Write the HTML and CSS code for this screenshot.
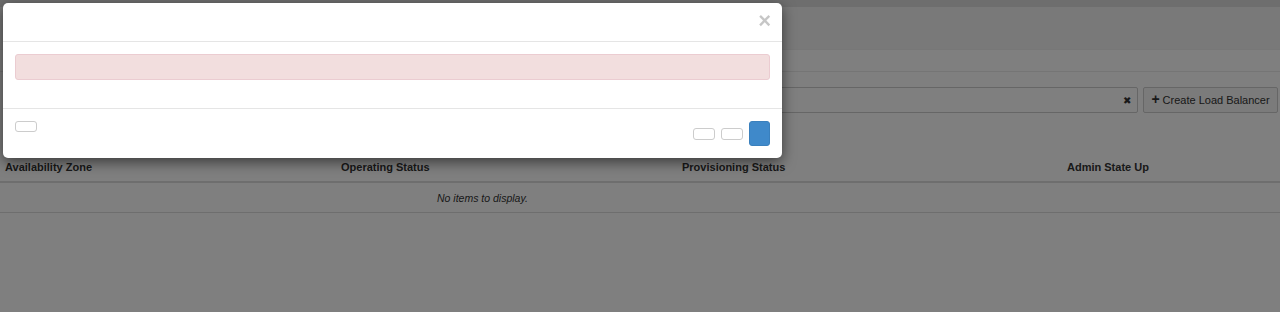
FILE: index.html
```html
<!DOCTYPE html>
<html lang="en">
<head>
  <meta charset="UTF-8">
  <title>Load Balancers</title>
  <link rel="stylesheet" href="styles.css">
</head>
<body>

<div class="page">
  <div class="topbar"></div>
  <div class="page-header"></div>

  <div class="toolbar">
    <div class="search">
      <span class="search-clear">&#x2716;</span>
    </div>
    <button class="btn-create"><span class="plus">+</span> Create Load Balancer</button>
  </div>

  <table class="lb-table">
    <thead>
      <tr>
        <th class="col-az">Availability Zone</th>
        <th class="col-op">Operating Status</th>
        <th class="col-prov">Provisioning Status</th>
        <th class="col-admin">Admin State Up</th>
      </tr>
    </thead>
    <tbody>
      <tr>
        <td colspan="4" class="empty">No items to display.</td>
      </tr>
    </tbody>
  </table>
</div>

<div class="backdrop"></div>

<!-- modal -->
<div class="modal">
  <div class="modal-header">
    <span class="close">&times;</span>
  </div>
  <div class="modal-body">
    <div class="alert"></div>
  </div>
  <div class="modal-footer">
    <button class="btn btn-help"></button>
    <div class="footer-actions">
      <button class="btn btn-small"></button>
      <button class="btn btn-small"></button>
      <button class="btn btn-primary"></button>
    </div>
  </div>
</div>

</body>
</html>
```

FILE: styles.css
```css
body {
  margin: 0;
  padding: 0;
  height: 312px;
  background: #fff;
  font-family: 'Liberation Sans', Arial, Helvetica, sans-serif;
  font-size: 12px;
  color: #333;
  overflow: hidden;
}

.page {
  width: 100%;
}

.topbar {
  height: 7px;
  background: #dcdcdc;
}

.page-header {
  height: 42px;
  background: #f3f3f3;
  border-bottom: 1px solid #eee;
  margin-bottom: 21px;
}

.toolbar {
  display: flex;
  justify-content: flex-end;
  gap: 5px;
  padding: 15px 2px 0 0;
  border-top: 1px solid #ebebeb;
}

.search {
  width: 380px;
  height: 24px;
  border: 1px solid #ccc;
  border-radius: 2px;
  display: flex;
  align-items: center;
  justify-content: flex-end;
  padding-right: 6px;
}

.search-clear {
  font-size: 10px;
  color: #333;
}

.btn-create {
  height: 26px;
  width: 135px;
  padding: 0 6px;
  display: flex;
  align-items: center;
  justify-content: center;
  gap: 3px;
  white-space: nowrap;
  font-family: 'Liberation Sans', Arial, sans-serif;
  font-size: 11px;
  color: #333;
  background: #f6f6f6;
  border: 1px solid #ccc;
  border-radius: 2px;
}

.plus {
  font-weight: 700;
  font-size: 14px;
  line-height: 1;
  margin-top: -2px;
}

.lb-table {
  width: 100%;
  border-collapse: collapse;
  margin-top: 41px;
}

.lb-table th {
  text-align: left;
  font-weight: 700;
  font-size: 11px;
  color: #333;
  padding: 7px 5px 8px;
  border-bottom: 2px solid #ddd;
}

.col-az { width: 326px; }
.col-op { width: 331px; }
.col-prov { width: 375px; }

.lb-table td {
  padding: 9px 5px 8px;
  border-bottom: 1px solid #ddd;
}

.empty {
  font-style: italic;
  font-size: 10.5px;
  padding-left: 437px !important;
}

.backdrop {
  position: fixed;
  top: 0;
  left: 0;
  right: 0;
  bottom: 0;
  background: rgba(0, 0, 0, 0.5);
}

.modal {
  position: absolute;
  top: 3px;
  left: 3px;
  width: 779px;
  height: 155px;
  background: #fff;
  border-radius: 5px;
  box-shadow: 0 4px 14px rgba(0, 0, 0, 0.55);
  display: flex;
  flex-direction: column;
}

.modal-header {
  height: 38px;
  border-bottom: 1px solid #e5e5e5;
  display: flex;
  justify-content: flex-end;
  align-items: center;
  padding-right: 11px;
}

.close {
  font-size: 22px;
  font-weight: 700;
  color: #000;
  opacity: 0.22;
  line-height: 1;
  margin-top: -3px;
}

.modal-body {
  padding: 12px 12px 28px;
  border-bottom: 1px solid #e5e5e5;
}

.alert {
  height: 24px;
  background: #f2dede;
  border: 1px solid #ebccd1;
  border-radius: 3px;
}

.modal-footer {
  flex: 1;
  display: flex;
  justify-content: space-between;
  padding: 12px 12px 0;
}

.btn {
  padding: 0;
  background: #fff;
  border: 1px solid #ccc;
  border-radius: 3px;
}

.btn-help {
  width: 22px;
  height: 11px;
}

.footer-actions {
  display: flex;
  gap: 6px;
  align-items: center;
  height: 25px;
}

.btn-small {
  width: 22px;
  height: 12px;
}

.btn-primary {
  width: 21px;
  height: 25px;
  background: #3f89ca;
  border-color: #3a80bd;
}
```
